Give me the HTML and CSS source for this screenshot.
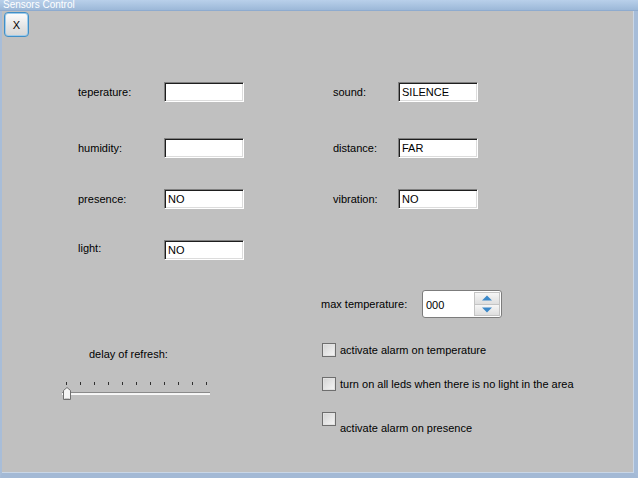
FILE: index.html
```html
<!DOCTYPE html>
<html>
<head>
<meta charset="utf-8">
<link rel="stylesheet" href="styles.css">
</head>
<body>
<div class="window">
  <div class="titlebar"><span class="title">Sensors Control</span></div>
  <div class="toolbar"><button class="close-btn">X</button></div>
  <div class="fields">
    <div class="row row-first">
      <span class="lbl-l">teperature:</span><div class="field"></div>
      <span class="lbl-r">sound:</span><div class="field">SILENCE</div>
    </div>
    <div class="row row-second">
      <span class="lbl-l">humidity:</span><div class="field"></div>
      <span class="lbl-r">distance:</span><div class="field">FAR</div>
    </div>
    <div class="row row-next">
      <span class="lbl-l">presence:</span><div class="field">NO</div>
      <span class="lbl-r">vibration:</span><div class="field">NO</div>
    </div>
    <div class="row row-next">
      <span class="lbl-l lbl-light">light:</span><div class="field">NO</div>
    </div>
  </div>
  <div class="lower">
    <div class="left-col">
      <div class="delay-label">delay of refresh:</div>
      <div class="slider">
        <div class="ticks">
          <i></i><i></i><i></i><i></i><i></i><i></i><i></i><i></i><i></i><i></i><i></i>
        </div>
        <div class="groove"></div>
        <svg class="handle" width="8" height="13" viewBox="0 0 8 13">
          <path d="M0.5 3.5 L4 0.5 L7.5 3.5 L7.5 12.5 L0.5 12.5 Z" fill="#f4f4f4" stroke="#6f6f6f"/>
          <path d="M1.5 11.5 L6.5 11.5" stroke="#c8c8c8"/>
        </svg>
      </div>
    </div>
    <div class="right-col">
      <div class="spin-row">
        <span class="spin-label">max temperature:</span>
        <div class="spinbox">
          <span class="spin-value">000</span>
          <div class="spin-buttons">
            <div class="spin-btn"><svg width="10" height="6" viewBox="0 0 10 6"><path d="M0 5.5 L5 0.5 L10 5.5 Z" fill="#3b88c9"/></svg></div>
            <div class="spin-btn"><svg width="10" height="6" viewBox="0 0 10 6"><path d="M0 0.5 L5 5.5 L10 0.5 Z" fill="#3b88c9"/></svg></div>
          </div>
        </div>
      </div>
      <div class="check check-1"><span class="box"></span><span class="check-text">activate alarm on temperature</span></div>
      <div class="check check-2"><span class="box"></span><span class="check-text">turn on all leds when there is no light in the area</span></div>
      <div class="check check-3"><span class="box"></span><span class="check-text check-text-low">activate alarm on presence</span></div>
    </div>
  </div>
</div>
</body>
</html>
```

FILE: styles.css
```css
* { box-sizing: border-box; }
html, body { margin: 0; padding: 0; }
body {
  width: 638px;
  height: 478px;
  overflow: hidden;
  font-family: "Liberation Sans", Arial, sans-serif;
  font-size: 11px;
  color: #000;
}
.window {
  width: 638px;
  height: 478px;
  background: #c0c0c0;
  border-left: 2px solid #a8bdd8;
  border-right: 4px solid #a6bcd8;
  border-bottom: 5px solid #a3b9d5;
  box-shadow: inset -1px 0 0 #c9d6e6, inset 0 -1px 0 #c9d6e6;
  display: flex;
  flex-direction: column;
}
.titlebar {
  height: 11px;
  margin-left: -2px;
  margin-right: -4px;
  background: linear-gradient(#b9d0ea, #9cb8d8);
  border-bottom: 1px solid #8eabcf;
}
.title {
  display: block;
  color: #fff;
  font-size: 10px;
  line-height: 10px;
  padding-left: 3px;
}
.toolbar {
  padding: 1px 0 0 2px;
  height: 26px;
}
.close-btn {
  width: 25px;
  height: 25px;
  padding: 0;
  margin: 0;
  border: 1px solid #3f8fc8;
  border-radius: 4px;
  background: linear-gradient(#fdfdfd, #e4e4e4 60%, #d6d6d6);
  box-shadow: inset 0 0 0 1px #9fcbea;
  font-family: "Liberation Sans", Arial, sans-serif;
  font-size: 11px;
  color: #000;
}
.fields {
  margin-top: 45px;
  padding-left: 76px;
}
.row {
  display: flex;
  align-items: center;
  height: 20px;
}
.row-second { margin-top: 36px; }
.row-next { margin-top: 31px; }
.lbl-l { width: 86px; }
.lbl-light { position: relative; top: -2px; }
.lbl-r { width: 65px; margin-left: 89px; }
.field {
  width: 80px;
  height: 20px;
  background: #fff;
  border-top: 1px solid #808080;
  border-left: 1px solid #808080;
  border-right: 1px solid #fff;
  border-bottom: 1px solid #fff;
  box-shadow: inset 1px 1px 0 #1e1e1e, inset -1px -1px 0 #dcdcdc;
  padding: 0 0 0 3px;
  line-height: 18px;
  font-size: 11px;
}
.lower {
  display: flex;
  margin-top: 30px;
}
.left-col {
  width: 319px;
  padding-top: 57px;
}
.delay-label {
  padding-left: 87px;
  line-height: 14px;
}
.slider {
  position: relative;
  margin-left: 60px;
  margin-top: 21px;
  width: 148px;
  height: 18px;
}
.ticks {
  display: flex;
  justify-content: space-between;
  width: 141px;
  margin-left: 4px;
  height: 3px;
}
.ticks i {
  display: block;
  width: 1px;
  height: 3px;
  background: #303030;
}
.groove {
  margin-top: 7px;
  border-top: 1px solid #8a8a8a;
  background: #f4f4f4;
  border-bottom: 1px solid #f8f8f8;
  height: 3px;
}
.handle {
  position: absolute;
  left: 1px;
  top: 5px;
}
.right-col {
  display: flex;
  flex-direction: column;
}
.spin-row {
  display: flex;
  align-items: center;
  height: 28px;
}
.spin-label { width: 101px; }
.spinbox {
  width: 80px;
  height: 28px;
  background: #fff;
  border: 1px solid #7c7c7c;
  border-radius: 3px;
  display: flex;
  align-items: center;
  padding: 1px 1px 1px 3px;
}
.spin-value { flex: 1; font-size: 11px; margin-top: 1px; }
.spin-buttons {
  width: 26px;
  height: 100%;
  display: flex;
  flex-direction: column;
}
.spin-btn {
  flex: 1;
  display: flex;
  align-items: center;
  justify-content: center;
  background: linear-gradient(#f6f6f6, #dedede);
  border: 1px solid #c4c4c4;
}
.spin-btn + .spin-btn { border-top: none; }
.check {
  display: flex;
  align-items: center;
  padding-left: 1px;
  height: 14px;
}
.check-1 { margin-top: 25px; }
.check-2 { margin-top: 20px; }
.check-3 { margin-top: 21px; align-items: flex-start; }
.box {
  width: 14px;
  height: 14px;
  border: 1px solid #6e6e6e;
  background: linear-gradient(135deg, #d2d2d2, #f6f6f6);
  box-shadow: inset 0 0 0 1px #e2e2e2;
  flex: none;
}
.check-text { margin-left: 4px; line-height: 14px; white-space: nowrap; }
.check-text-low { margin-top: 9px; }
```
